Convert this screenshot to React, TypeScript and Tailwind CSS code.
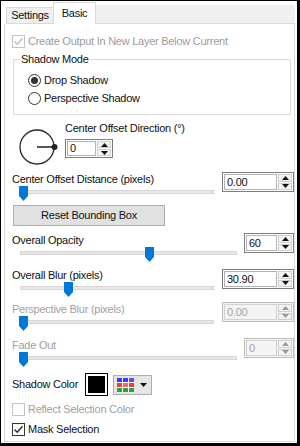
import React from 'react'

const font = { fontFamily: '"Liberation Sans", Arial, sans-serif' }

function Check({ checked, disabled }: { checked?: boolean; disabled?: boolean }) {
    return (
        <div
            className={`flex h-[13px] w-[13px] shrink-0 items-center justify-center border bg-white ${
                disabled ? 'border-[#c4c4c4]' : 'border-[#333333]'
            }`}
        >
            {checked && (
                <svg width="11" height="11" viewBox="0 0 11 11">
                    <polyline
                        points="1.5,5.5 4.2,8.3 9.5,2.2"
                        fill="none"
                        stroke={disabled ? '#bdbdbd' : '#222222'}
                        strokeWidth="1.3"
                    />
                </svg>
            )}
        </div>
    )
}

function Radio({ checked }: { checked?: boolean }) {
    return (
        <div className="flex h-[13px] w-[13px] shrink-0 items-center justify-center rounded-full border border-[#333333] bg-white">
            {checked && <div className="h-[7px] w-[7px] rounded-full bg-[#333333]" />}
        </div>
    )
}

function Arrow({ up, disabled }: { up?: boolean; disabled?: boolean }) {
    return (
        <svg width="7" height="4" viewBox="0 0 7 4">
            <polygon
                points={up ? '0,4 7,4 3.5,0' : '0,0 7,0 3.5,4'}
                fill={disabled ? '#9a9a9a' : '#111111'}
            />
        </svg>
    )
}

function Spin({ value, w, h = 'h-[20px]', disabled }: { value: string; w: string; h?: string; disabled?: boolean }) {
    return (
        <div className={`flex ${w} ${h} shrink-0 gap-px border p-px ${disabled ? 'border-[#bdbdbd] bg-[#f4f4f4]' : 'border-[#7e7e7e] bg-white'}`}>
            <div
                className={`flex flex-1 items-center border pl-[2px] text-[11px] ${
                    disabled ? 'border-[#d2d2d2] bg-[#f4f4f4] text-[#a3a3a3]' : 'border-[#b4b4b4] text-[#111]'
                }`}
            >
                {value}
            </div>
            <div className="flex w-[14px] flex-col gap-px">
                <div className="flex flex-1 items-center justify-center border border-[#cfcfcf] bg-[#f3f3f3]">
                    <Arrow up disabled={disabled} />
                </div>
                <div className="flex flex-1 items-center justify-center border border-[#cfcfcf] bg-[#f3f3f3]">
                    <Arrow disabled={disabled} />
                </div>
            </div>
        </div>
    )
}

function Slider({ w, pos }: { w: string; pos: number }) {
    return (
        <div className={`relative ml-[8px] h-[15px] ${w}`}>
            <div className="mt-[4px] h-[4px] w-full border border-[#d6d6d6] bg-[#e7e7e7]" />
            <svg className="absolute top-0" style={{ left: pos }} width="9" height="15" viewBox="0 0 9 15">
                <polygon points="0,0 9,0 9,10 4.5,15 0,10" fill="#0078d7" />
            </svg>
        </div>
    )
}

function SliderRow({
    label,
    value,
    wide,
    pos,
    disabled,
    labelTop = 'mt-[1px]',
    rowTop,
}: {
    label: string
    value: string
    wide?: boolean
    pos: number
    disabled?: boolean
    labelTop?: string
    rowTop: string
}) {
    return (
        <div className={`flex items-start justify-between ${rowTop}`}>
            <div className="flex flex-col">
                <div className={`${labelTop} h-[13px] leading-[13px] ${disabled ? 'text-[#a0a0a0]' : 'text-[#111]'}`}>{label}</div>
                <Slider w={wide ? 'w-[194px]' : 'w-[217px]'} pos={pos} />
            </div>
            <Spin value={value} w={wide ? 'w-[72px]' : 'w-[50px]'} disabled={disabled} />
        </div>
    )
}

export default function App() {
    return (
        <div
            style={font}
            className="h-[446px] w-[300px] overflow-hidden border-b-[3px] border-l border-r-[3px] border-t border-black bg-white text-[11px] tracking-[-0.25px] text-[#111]"
        >
            {/* tabs */}
            <div className="ml-[3px] mr-[2px] mt-[1px] flex h-[22px] items-end pl-[2px]">
                <div className="flex h-[17px] w-[47px] items-center justify-center border-b border-l border-t border-[#d9d9d9] bg-[#f0f0f0]">
                    Settings
                </div>
                <div className="flex h-[22px] w-[43px] justify-center border-l border-r border-t border-[#d9d9d9] bg-white pt-[4px] leading-[13px]">
                    Basic
                </div>
                <div className="h-[19px] flex-1 border-b border-[#d9d9d9] bg-[#f0f0f0]" />
            </div>

            {/* panel */}
            <div className="ml-[3px] mr-[2px] flex h-[418px] flex-col border-b border-l border-r border-[#d9d9d9] pl-[7px]">
                <div className="mt-[11px] flex items-center gap-[3px] text-[#9b9b9b]">
                    <Check checked disabled />
                    <span className="leading-[13px]">Create Output In New Layer Below Current</span>
                </div>

                <fieldset className="ml-px mt-[5px] w-[278px] border border-[#dcdcdc] pb-[9px] pl-[6px]">
                    <legend className="px-px leading-[13px]">Shadow Mode</legend>
                    <div className="ml-[8px] mt-[8px] flex items-center gap-[3px]">
                        <Radio checked />
                        <span className="leading-[13px]">Drop Shadow</span>
                    </div>
                    <div className="ml-[8px] mt-[5px] flex items-center gap-[3px]">
                        <Radio />
                        <span className="leading-[13px]">Perspective Shadow</span>
                    </div>
                </fieldset>

                {/* direction */}
                <div className="mt-[7px] flex h-[44px]">
                    <svg width="48" height="44" viewBox="0 0 48 44">
                        <circle cx="25" cy="25" r="17" fill="none" stroke="#2a2a2a" strokeWidth="1.3" />
                        <line x1="25" y1="25" x2="42" y2="25" stroke="#555" strokeWidth="2" />
                        <circle cx="42.5" cy="25" r="3" fill="#222" />
                    </svg>
                    <div className="ml-[5px] flex flex-col">
                        <div className="h-[13px] leading-[13px]">Center Offset Direction (°)</div>
                        <div className="mt-[4px]">
                            <Spin value="0" w="w-[48px]" h="h-[19px]" />
                        </div>
                    </div>
                </div>

                <SliderRow rowTop="mt-[6px]" label="Center Offset Distance (pixels)" value="0.00" wide pos={-1} />

                <div className="ml-px mt-[4px] flex h-[21px] w-[152px] items-center justify-center border border-[#adadad] bg-[#e1e1e1]">
                    Reset Bounding Box
                </div>

                <SliderRow rowTop="mt-[7px]" label="Overall Opacity" value="60" pos={125} />
                <SliderRow rowTop="mt-[7px]" labelTop="mt-0" label="Overall Blur (pixels)" value="30.90" wide pos={44} />
                <SliderRow rowTop="mt-[5px]" label="Perspective Blur (pixels)" value="0.00" wide pos={-1} disabled />
                <SliderRow rowTop="mt-[7px]" label="Fade Out" value="0" pos={-1} disabled />

                {/* shadow color */}
                <div className="mt-[6px] flex items-center">
                    <span className="w-[73px] leading-[13px]">Shadow Color</span>
                    <div className="h-[23px] w-[23px] border border-black bg-white p-[2px]">
                        <div className="h-full w-full bg-black" />
                    </div>
                    <div className="ml-[5px] flex h-[20px] w-[39px] items-center gap-[6px] border border-[#adadad] bg-[#e5e5e5] pl-[3px]">
                        <svg width="17" height="14" viewBox="0 0 17 14">
                            <rect width="17" height="14" fill="#ffffff" />
                            <rect x="0" y="0" width="5" height="4" fill="#3a3aff" />
                            <rect x="6" y="0" width="5" height="4" fill="#3a3aff" />
                            <rect x="12" y="0" width="5" height="4" fill="#5252ff" />
                            <rect x="0" y="5" width="5" height="4" fill="#f03c3c" />
                            <rect x="6" y="5" width="5" height="4" fill="#ff5a7a" />
                            <rect x="12" y="5" width="5" height="4" fill="#f03c3c" />
                            <rect x="0" y="10" width="5" height="4" fill="#1fa83a" />
                            <rect x="6" y="10" width="5" height="4" fill="#1fa83a" />
                            <rect x="12" y="10" width="5" height="4" fill="#1fa83a" />
                        </svg>
                        <svg width="7" height="4" viewBox="0 0 7 4">
                            <polygon points="0,0 7,0 3.5,4" fill="#111" />
                        </svg>
                    </div>
                </div>

                <div className="mt-[7px] flex items-center gap-[3px] text-[#a0a0a0]">
                    <Check disabled />
                    <span className="leading-[13px]">Reflect Selection Color</span>
                </div>
                <div className="mt-[7px] flex items-center gap-[3px]">
                    <Check checked />
                    <span className="leading-[13px]">Mask Selection</span>
                </div>
            </div>
        </div>
    )
}
